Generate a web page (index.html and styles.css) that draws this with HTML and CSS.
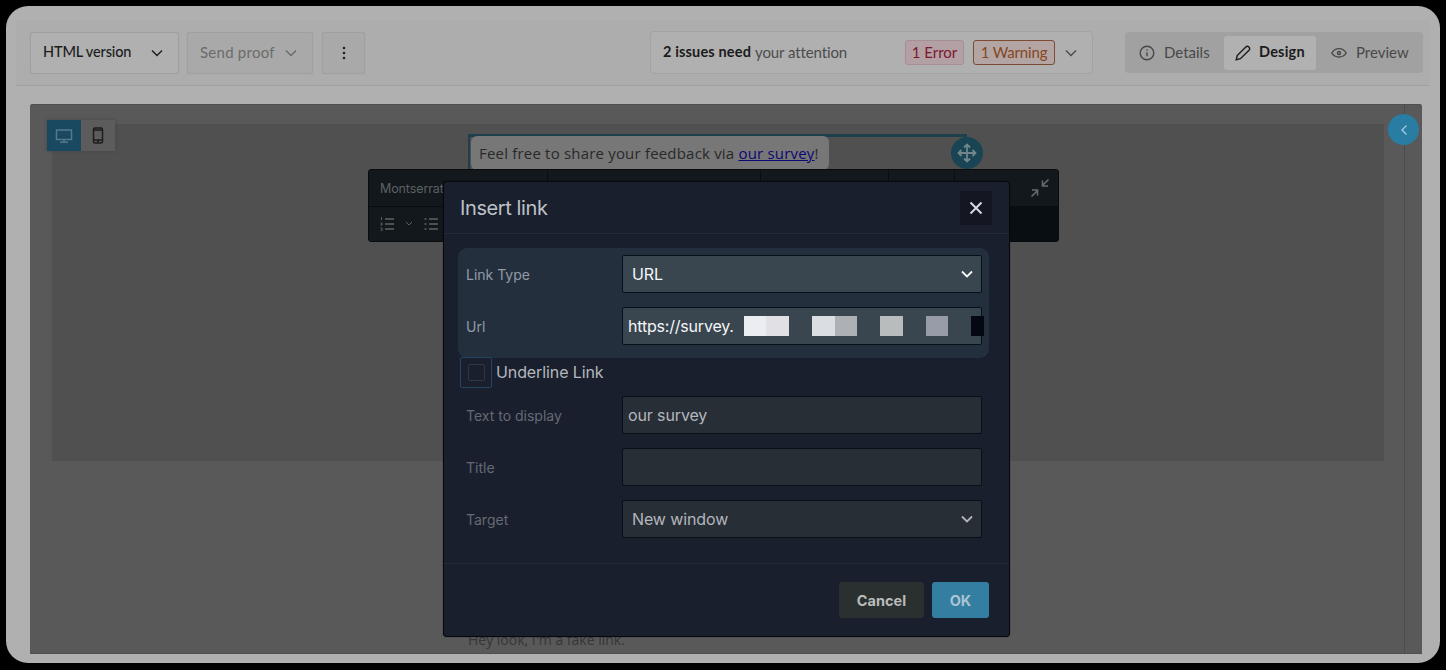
FILE: index.html
```html
<!DOCTYPE html>
<html lang="en">
  <head>
    <meta charset="utf-8">
    <title>Email editor - Insert link</title>
    <link rel="stylesheet" href="styles.css">
  </head>
  <body>
    <div class="window">
      <header class="topbar">
        <button class="btn btn-version"><span>HTML version</span>
          <svg class="chevron" viewBox="0 0 12 8"><path d="M1 1.5l5 5 5-5"/></svg>
        </button>
        <button class="btn btn-proof"><span>Send proof</span>
          <svg class="chevron" viewBox="0 0 12 8"><path d="M1 1.5l5 5 5-5"/></svg>
        </button>
        <button class="btn btn-more">
          <svg width="4" height="14" viewBox="0 0 4 14"><circle cx="2" cy="2" r="1.3"/><circle cx="2" cy="7" r="1.3"/><circle cx="2" cy="12" r="1.3"/></svg>
        </button>
        <div class="issues">
          <strong>2 issues need</strong><span class="issues-text">your attention</span>
          <span class="tag tag-error">1 Error</span>
          <span class="tag tag-warning">1 Warning</span>
          <svg class="chevron" viewBox="0 0 12 8"><path d="M1 1.5l5 5 5-5"/></svg>
        </div>
        <nav class="tabs">
          <a class="tab tab-details">
            <svg width="16" height="16" viewBox="0 0 16 16"><circle cx="8" cy="8" r="6.8"/><path d="M8 7.2v4M8 4.6v1.2"/></svg>
            <span>Details</span>
          </a>
          <a class="tab tab-design active">
            <svg width="16" height="16" viewBox="0 0 16 16"><path d="M1.2 14.8l1-4.2 8.6-8.6c2-1.9 5.1 1 3.2 3.2l-8.6 8.5z"/></svg>
            <span>Design</span>
          </a>
          <a class="tab tab-preview">
            <svg width="16" height="12" viewBox="0 0 16 12"><path d="M.8 6C4 .1 12 .1 15.2 6 12 11.4 4 11.4.8 6z"/><circle cx="8" cy="6" r="1.5"/></svg>
            <span>Preview</span>
          </a>
        </nav>
      </header>

      <main class="canvas">
        <div class="email">
          <div class="selected-row">
            <p class="feedback"><span>Feel free to share your feedback via <a>our survey</a>!</span></p>
          </div>
        </div>
        <p class="fake-link">Hey look, I'm a fake link.</p>
        <div class="ruler"></div>

        <div class="devices">
          <button class="device active">
            <svg width="18" height="16" viewBox="0 0 18 16"><path d="M1.5 2h15v9.5h-15zM5 14.2h8M9 11.5V14"/></svg>
          </button>
          <button class="device">
            <svg width="12" height="17" viewBox="0 0 12 17"><rect x="1.5" y="1" width="9" height="15" rx="1.5"/><path d="M1.5 3h9M1.5 13h9M5 14.5h2"/></svg>
          </button>
        </div>
        <div class="move">
          <svg width="20" height="20" viewBox="0 0 20 20"><path d="M10 2v16M2 10h16M7 4.500L10 1.500l3 3M7 15.500l3 3 3-3M4.500 7l-3 3 3 3M15.500 7l3 3-3 3"/></svg>
        </div>
        <div class="collapse">
          <svg width="8" height="12" viewBox="0 0 8 12"><path d="M6.5 1.5L2 6l4.500 4.500"/></svg>
        </div>
      </main>
    </div>

    <div class="toolbar">
      <div class="toolbar-row">
        <span class="font-name">Montserrat</span>
        <i></i><i></i><i></i><i></i>
        <span class="shrink">
          <svg width="20" height="20" viewBox="0 0 20 20"><path d="M18.500 1.500l-6 6M12.500 2.500V8H18M1.500 18.500l6-6M2 12h5.500v5.500"/></svg>
        </span>
      </div>
      <div class="toolbar-row">
        <svg class="list" width="15" height="14" viewBox="0 0 15 14"><path d="M5 2h9M5 7h9M5 12h9"/><path d="M1.500 0v3M.5 6H2v2H.5M.5 11H2v3H.5" stroke-width="1"/></svg>
        <svg class="small-chevron" width="8" height="6" viewBox="0 0 8 6"><path d="M1 1l3 3 3-3"/></svg>
        <svg class="list" width="15" height="14" viewBox="0 0 15 14"><path d="M5 2h9M5 7h9M5 12h9M.5 2h2M.5 7h2M.5 12h2"/></svg>
      </div>
    </div>

    <div class="modal">
      <div class="modal-header">
        <h1>Insert link</h1>
        <button class="close">
          <svg width="14" height="14" viewBox="0 0 14 14"><path d="M1.500 1.500l11 11M12.500 1.500l-11 11"/></svg>
        </button>
      </div>
      <div class="modal-body">
        <div class="highlight">
          <div class="field">
            <label>Link Type</label>
            <div class="input select"><span>URL</span>
              <svg class="chevron" viewBox="0 0 12 8"><path d="M1 1.500l5 5 5-5"/></svg>
            </div>
          </div>
          <div class="field">
            <label>Url</label>
            <div class="input"><span class="address">https://survey.</span>
              <div class="mosaic"><b class="p1"></b><b class="p2"></b><b></b><b class="p3"></b><b class="p4"></b><b></b><b class="p5"></b><b></b><b class="p6"></b><b></b><b class="p7"></b></div>
            </div>
          </div>
        </div>
        <div class="underline">
          <span class="checkbox"><span></span></span>
          <span>Underline Link</span>
        </div>
        <div class="field">
          <label>Text to display</label>
          <div class="input"><span>our survey</span></div>
        </div>
        <div class="field">
          <label>Title</label>
          <div class="input"></div>
        </div>
        <div class="field">
          <label>Target</label>
          <div class="input select"><span>New window</span>
            <svg class="chevron" viewBox="0 0 12 8"><path d="M1 1.500l5 5 5-5"/></svg>
          </div>
        </div>
      </div>
      <div class="modal-footer">
        <button class="cancel">Cancel</button>
        <button class="ok">OK</button>
      </div>
    </div>
  </body>
</html>
```

FILE: styles.css
```css
* {
  box-sizing: border-box;
}

html,
body {
  margin: 0;
  height: 100%;
  overflow: hidden;
}

body {
  padding: 6px;
  background: #000;
  font-family: Lato, "Liberation Sans", sans-serif;
}

button {
  padding: 0;
  border: 0;
  font: inherit;
  letter-spacing: inherit;
  color: inherit;
}

p,
h1 {
  margin: 0;
}

svg {
  flex: none;
  fill: none;
  stroke: currentColor;
}

.chevron {
  width: 12px;
  height: 8px;
  stroke-width: 1.4;
}

.window {
  height: 657px;
  width: 1434px;
  padding: 14px 10px 0;
  border-radius: 22px;
  background: #b0b0b0;
}

/* top bar */

.topbar {
  display: flex;
  align-items: center;
  height: 66px;
  padding: 0 7px 0 14px;
  border-bottom: 1px solid #a1a1a1;
  background: #adadad;
  font-size: 15px;
  line-height: 18px;
}

.topbar span,
.topbar strong {
  padding-bottom: 1px;
}

.btn {
  display: flex;
  align-items: center;
  justify-content: space-between;
  height: 42px;
  margin-right: 9px;
  border: 1px solid #a0a0a0;
  border-radius: 3px;
  background: #a9a9a9;
  box-shadow: 0 0 1px #999;
}

.btn-version {
  width: 149px;
  padding: 0 15px 0 12px;
  background: #b0b0b0;
  color: #1c1c1c;
  font-size: 14.5px;
  font-weight: 500;
  letter-spacing: -0.15px;
}

.btn-proof {
  width: 126px;
  margin-left: -1px;
  padding: 0 15px 0 12px;
  color: #6b6b6b;
  letter-spacing: 0.25px;
}

.btn-more {
  width: 43px;
  justify-content: center;
  color: #222;
}

.btn-more svg {
  fill: currentColor;
  stroke: none;
}

.issues {
  display: flex;
  align-items: center;
  width: 443px;
  height: 43px;
  margin-left: 276px;
  padding: 0 15px 0 12px;
  border: 1px solid #a3a3a3;
  border-radius: 4px;
  background: #b0b0b0;
  color: #4c4c4c;
}

.issues strong {
  margin-right: 4px;
  color: #1b1b1b;
  font-size: 14.5px;
  letter-spacing: 0.15px;
}

.issues-text {
  margin-right: auto;
  letter-spacing: -0.1px;
}

.tag {
  display: flex;
  align-items: center;
  justify-content: center;
  height: 25px;
  border: 1px solid #a78e92;
  border-radius: 3px;
}

.tag-error {
  width: 59px;
  margin-right: 9px;
  background: #b3a0a4;
  color: #7d1730;
}

.tag-warning {
  width: 82px;
  margin-right: 10px;
  border-color: #7d4a32;
  background: #b2a5a3;
  color: #864722;
  letter-spacing: -0.15px;
}

.tabs {
  display: flex;
  align-items: center;
  width: 298px;
  height: 41px;
  margin-left: auto;
  border-radius: 4px;
  background: #a1a1a1;
  color: #484848;
}

.tab {
  display: flex;
  align-items: center;
  height: 34px;
  border-radius: 3px;
}

.tab svg {
  stroke-width: 1.4;
}

.tab-details {
  width: 99px;
  padding-left: 14px;
  gap: 9px;
}

.tab-design {
  width: 92px;
  padding-left: 11px;
  gap: 8px;
}

.tab-preview {
  padding-left: 15px;
  gap: 9px;
}

.tab.active {
  background: #b1b1b1;
  color: #1c1c1c;
  font-weight: bold;
  font-size: 14.5px;
  letter-spacing: 0.2px;
}

/* canvas */

.canvas {
  position: relative;
  width: 1392px;
  height: 550px;
  margin: 18px 0 0 14px;
  padding: 20px 0 0 22px;
  overflow: hidden;
  border-radius: 3px 3px 0 0;
  background: #595959;
  box-shadow: inset 0 1px #505050, inset 0 -1px #505050;
}

.email {
  width: 1332px;
  height: 337px;
  padding: 10px 0 0 416px;
  background: #505050;
}

.selected-row {
  width: 499px;
  height: 42px;
  border: solid #203f4d;
  border-width: 3px 0 0 2px;
}

.feedback {
  display: flex;
  align-items: center;
  width: 358px;
  height: 34px;
  margin: -1px 0 0 1px;
  padding: 0 0 0 8px;
  border-radius: 6px;
  background: #777;
  color: #292929;
  font-family: "Open Sans", sans-serif;
  font-size: 15px;
  letter-spacing: 0.19px;
  white-space: nowrap;
}

.feedback a {
  color: #0b0773;
  text-decoration: underline;
}

.fake-link {
  margin: 169px 0 0 416px;
  color: #363636;
  font-family: "Open Sans", sans-serif;
  font-size: 14px;
  line-height: 20px;
}

.ruler {
  position: absolute;
  top: 0;
  right: 17px;
  width: 1px;
  height: 100%;
  background: #4c4c4c;
}

.devices {
  position: absolute;
  top: 16px;
  left: 17px;
  display: flex;
  box-shadow: 0 0 3px #444;
}

.device {
  display: flex;
  align-items: center;
  justify-content: center;
  width: 34px;
  height: 31px;
  background: #5c5c5c;
  color: #1d1d1d;
  stroke-width: 1.5;
}

.device.active {
  background: #184961;
  color: #54788a;
}

.move,
.collapse {
  position: absolute;
  display: flex;
  align-items: center;
  justify-content: center;
  border-radius: 50%;
}

.move {
  top: 33px;
  left: 921px;
  width: 32px;
  height: 32px;
  background: #184453;
  color: #71858c;
  stroke-width: 1.8;
}

.collapse {
  top: 10px;
  left: 1358px;
  width: 31px;
  height: 31px;
  background: #297da3;
  color: #9bcadb;
  stroke-width: 1.4;
}

/* text toolbar behind the modal */

.toolbar {
  position: absolute;
  top: 169px;
  left: 368px;
  width: 691px;
  height: 73px;
  border: 1px solid #090c0f;
  border-radius: 3px;
  background: #090e13;
  color: #5d6264;
  font-family: Inter, sans-serif;
  font-size: 12.5px;
  letter-spacing: -0.1px;
}

.toolbar-row {
  display: flex;
  align-items: center;
  height: 36px;
  padding-left: 11px;
  background: #12181c;
}

.toolbar-row + .toolbar-row {
  height: 35px;
  width: 180px;
  border-top: 1px solid #080c10;
}

.font-name {
  width: 167px;
}

.toolbar i {
  width: 1px;
  height: 36px;
  margin-right: 212px;
  background: #0a0e11;
}

.toolbar i:nth-of-type(2) {
  margin-right: 127px;
}

.toolbar i:nth-of-type(3) {
  margin-right: 65px;
}

.toolbar i:nth-of-type(4) {
  margin-right: 0;
}

.shrink {
  display: flex;
  margin: 0 8px 0 auto;
  color: #666b6d;
  stroke-width: 1.6;
}

.list {
  stroke-width: 1.5;
}

.small-chevron {
  margin: 0 11px 0 10px;
}

/* modal */

.modal {
  position: absolute;
  top: 181px;
  left: 443px;
  width: 567px;
  height: 456px;
  border: 1px solid #05090e;
  border-radius: 4px;
  background: #191f2c;
  box-shadow: 0 0 1px #05090e;
  color: #b4b8be;
  font-family: Inter, sans-serif;
}

.modal-header {
  display: flex;
  align-items: center;
  justify-content: space-between;
  height: 52px;
  padding: 0 17px 0 16px;
  border-bottom: 1px solid #222b37;
}

.modal-header h1 {
  color: #bec1c7;
  font-size: 20px;
  font-weight: 400;
  letter-spacing: -0.4px;
}

.close {
  display: flex;
  align-items: center;
  justify-content: center;
  width: 32px;
  height: 34px;
  background: #141721;
  color: #d6d7df;
  stroke-width: 2;
}

.modal-body {
  height: 330px;
  padding: 14px 18px 0 14px;
  border-bottom: 1px solid #242c38;
}

.highlight {
  width: 531px;
  height: 110px;
  padding-top: 7px;
  border-radius: 9px;
  background: #232f3d;
}

.field {
  display: flex;
  align-items: center;
  height: 38px;
  margin-bottom: 13.8px;
  padding-left: 8px;
}

.field label {
  width: 156px;
  padding-top: 1px;
  color: #656a75;
  font-size: 14px;
}

.input {
  display: flex;
  align-items: center;
  width: 360px;
  height: 38px;
  padding-left: 5px;
  border: 1px solid #080f17;
  border-radius: 2px;
  background: #282e35;
  color: #b2b6bd;
  font-size: 16px;
  letter-spacing: -0.12px;
  white-space: nowrap;
}

.select {
  justify-content: space-between;
  padding: 0 8px 0 9px;
}

.select .chevron {
  stroke-width: 1.8;
}

.highlight label {
  color: #929aa6;
}

.highlight .input {
  background: #39454f;
  color: #f4f6f8;
}

.address {
  flex: none;
  width: 115.5px;
  letter-spacing: -0.2px;
}

.mosaic {
  display: flex;
  flex: none;
}

.mosaic b {
  width: 22.75px;
  height: 19.5px;
}

.p1 { background: #ececf3; }
.p2 { background: #e0e0e5; }
.p3 { background: #dadee3; }
.p4 { background: #abb1b5; }
.p5 { background: #b8bcbd; }
.p6 { background: #989ca8; }

.mosaic .p7 {
  width: 13px;
  background: #050812;
}

.underline {
  display: flex;
  align-items: center;
  height: 31px;
  margin: -1px 0 8px 2px;
  font-size: 16px;
  line-height: 18px;
  letter-spacing: -0.1px;
}

.underline > span:last-child {
  padding-bottom: 2px;
}

.checkbox {
  display: flex;
  align-items: center;
  justify-content: center;
  width: 32px;
  height: 31px;
  margin-right: 4px;
  border: 1px solid #224562;
  border-radius: 2px;
}

.checkbox span {
  width: 17px;
  height: 17px;
  border: 1px solid #303740;
  border-radius: 2px;
}

.modal-footer {
  display: flex;
  justify-content: flex-end;
  gap: 8px;
  padding: 18px 20px 0 0;
  font-size: 14.5px;
  font-weight: 700;
}

.cancel {
  width: 85px;
  height: 36px;
  border-radius: 3px;
  background: #2a302f;
  color: #b9bbbb;
}

.ok {
  width: 57px;
  height: 36px;
  border-radius: 3px;
  background: #337ea1;
  color: #abc4cf;
}
```
